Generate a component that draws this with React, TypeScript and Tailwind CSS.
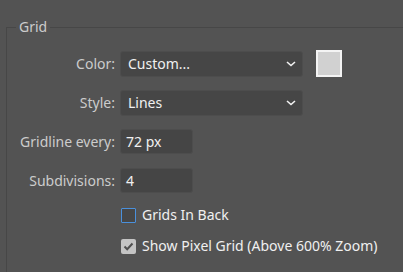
import React from "react";

const Chevron = () => (
  <svg width="10" height="6" viewBox="0 0 10 6" className="shrink-0">
    <path d="M1 1 L5 4.5 L9 1" fill="none" stroke="#f2f2f2" strokeWidth="1.6" />
  </svg>
);

const Select = ({ value, width }: { value: string; width: string }) => (
  <div
    className={`flex h-[26px] ${width} items-center justify-between rounded-[3px] border border-[#4d4d4d] bg-[#464646] pl-[7px] pr-[6px] text-[#f0f0f0]`}
  >
    <span>{value}</span>
    <Chevron />
  </div>
);

const TextInput = ({ value }: { value: string }) => (
  <div className="flex h-[25px] w-[73px] items-center rounded-[3px] border border-[#4d4d4d] bg-[#454545] pl-[5px] text-[#f0f0f0]">
    {value}
  </div>
);

const Row = ({ label, children, className }: { label: string; children: React.ReactNode; className?: string }) => (
  <div className={`flex items-center ${className ?? ""}`}>
    <div className="w-[109px] pr-[1px] text-right text-[#cccccc]">{label}</div>
    <div className="ml-[4px] flex items-center">{children}</div>
  </div>
);

export default function App() {
  return (
    <div
      className="h-[272px] w-full overflow-hidden bg-[#535353] pl-[6px] pt-[18px] text-[14px] leading-[18px]"
      style={{ fontFamily: '"Noto Sans", "Liberation Sans", sans-serif' }}
    >
      <fieldset className="h-[300px] border-l border-t border-[#474747] pt-[14px]">
        <legend className="ml-[9px] px-[3px] text-[#cccccc]">Grid</legend>

        <Row label="Color:">
          <Select value="Custom..." width="w-[183px]" />
          <div className="ml-[13px] h-[27px] w-[26px] border-2 border-[#f4f4f4] bg-[#d1d1d1]" />
        </Row>

        <Row label="Style:" className="mt-[13px]">
          <Select value="Lines" width="w-[183px]" />
        </Row>

        <Row label="Gridline every:" className="mt-[13px]">
          <TextInput value="72 px" />
        </Row>

        <Row label="Subdivisions:" className="mt-[14px]">
          <TextInput value="4" />
        </Row>

        <div className="ml-[114px] mt-[11px] flex h-[22px] items-center">
          <div className="h-[15px] w-[15px] rounded-[1px] border border-[#4a90dc] bg-[#474747]" />
          <span className="ml-[6px] text-[#f0f0f0]">Grids In Back</span>
        </div>

        <div className="ml-[114px] mt-[9px] flex h-[22px] items-center">
          <div className="flex h-[15px] w-[15px] items-center justify-center rounded-[2px] bg-[#c4c4c4]">
            <svg width="11" height="9" viewBox="0 0 11 9">
              <path d="M1.5 4.5 L4.2 7.2 L9.5 1.5" fill="none" stroke="#4f4f4f" strokeWidth="2" />
            </svg>
          </div>
          <span className="ml-[6px] text-[#f0f0f0]">Show Pixel Grid (Above 600% Zoom)</span>
        </div>
      </fieldset>
    </div>
  );
}
